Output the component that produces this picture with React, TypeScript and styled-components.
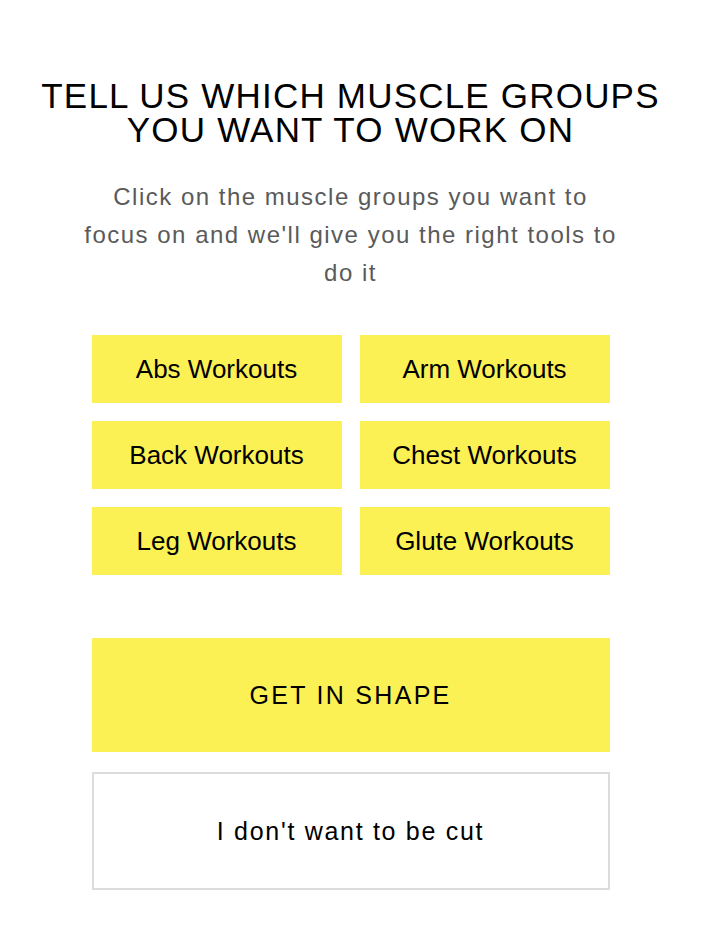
import React, { useState } from 'react'
import styled, { createGlobalStyle } from 'styled-components'

const GlobalStyle = createGlobalStyle`
  html, body {
    margin: 0;
    padding: 0;
    background: #ffffff;
  }
  body {
    font-family: 'Liberation Sans', Arial, Helvetica, sans-serif;
    color: #000;
  }
`

const YELLOW = '#fcf154'

const Page = styled.main`
  display: flex;
  flex-direction: column;
  align-items: center;
  padding-top: 79px;
`

const Title = styled.h1`
  margin: 0;
  font-size: 35px;
  font-weight: 400;
  line-height: 34px;
  letter-spacing: 1.2px;
  text-align: center;
  color: #000;
`

const Subtitle = styled.p`
  margin: 31px 0 0;
  width: 545px;
  font-size: 24px;
  line-height: 38px;
  letter-spacing: 1.5px;
  text-align: center;
  color: #5a5a5a;
`

const Panel = styled.section`
  width: 518px;
  display: flex;
  flex-direction: column;
`

const Grid = styled.div`
  display: grid;
  grid-template-columns: repeat(2, 1fr);
  column-gap: 18px;
  row-gap: 18px;
  margin-top: 43px;
`

const Tile = styled.button<{ $active?: boolean }>`
  height: 68px;
  border: none;
  background: ${YELLOW};
  font-family: inherit;
  font-size: 26px;
  color: #000;
  cursor: pointer;
  outline: ${(p) => (p.$active ? '2px solid #000' : 'none')};
`

const Primary = styled.button`
  margin-top: 63px;
  height: 114px;
  border: none;
  background: ${YELLOW};
  font-family: inherit;
  font-size: 25px;
  letter-spacing: 2.3px;
  color: #000;
  cursor: pointer;
`

const Secondary = styled.button`
  margin-top: 20px;
  height: 118px;
  border: 2px solid #dcdcdc;
  background: #fff;
  font-family: inherit;
  font-size: 25px;
  letter-spacing: 1.7px;
  color: #000;
  cursor: pointer;
`

const GROUPS = [
  'Abs Workouts',
  'Arm Workouts',
  'Back Workouts',
  'Chest Workouts',
  'Leg Workouts',
  'Glute Workouts',
]

export default function App() {
  const [picked, setPicked] = useState<string[]>([])

  const toggle = (g: string) =>
    setPicked((cur) => (cur.includes(g) ? cur.filter((x) => x !== g) : [...cur, g]))

  return (
    <>
      <GlobalStyle />
      <Page>
        <Title>
          TELL US WHICH MUSCLE GROUPS
          <br />
          YOU WANT TO WORK ON
        </Title>
        <Subtitle>
          Click on the muscle groups you want to focus on and we'll give you the right tools to do it
        </Subtitle>
        <Panel>
          <Grid>
            {GROUPS.map((g) => (
              <Tile key={g} $active={picked.includes(g)} onClick={() => toggle(g)}>
                {g}
              </Tile>
            ))}
          </Grid>
          <Primary>GET IN SHAPE</Primary>
          <Secondary>I don't want to be cut</Secondary>
        </Panel>
      </Page>
    </>
  )
}
